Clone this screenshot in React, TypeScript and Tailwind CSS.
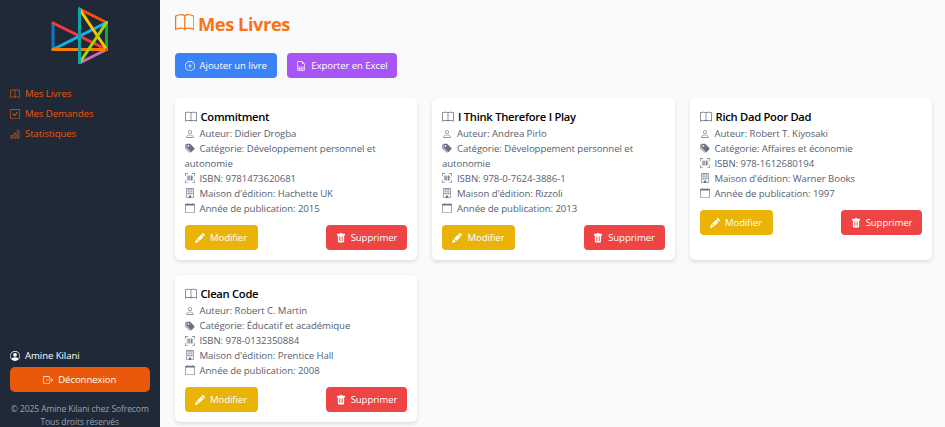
import type { ReactNode } from "react";
import {
  BsBarChart,
  BsBook,
  BsBoxArrowRight,
  BsBuilding,
  BsCalendar,
  BsCheckSquare,
  BsFileEarmarkSpreadsheet,
  BsPencilFill,
  BsPerson,
  BsPersonCircle,
  BsPlusCircle,
  BsTagsFill,
  BsTrashFill,
  BsUpcScan,
} from "react-icons/bs";

type Book = {
  title: string;
  author: string;
  category: string;
  isbn: string;
  publisher: string;
  year: number;
};

const books: Book[] = [
  { title: "Commitment", author: "Didier Drogba", category: "Développement personnel et autonomie", isbn: "9781473620681", publisher: "Hachette UK", year: 2015 },
  { title: "I Think Therefore I Play", author: "Andrea Pirlo", category: "Développement personnel et autonomie", isbn: "978-0-7624-3886-1", publisher: "Rizzoli", year: 2013 },
  { title: "Rich Dad Poor Dad", author: "Robert T. Kiyosaki", category: "Affaires et économie", isbn: "978-1612680194", publisher: "Warner Books", year: 1997 },
  { title: "Clean Code", author: "Robert C. Martin", category: "Éducatif et académique", isbn: "978-0132350884", publisher: "Prentice Hall", year: 2008 },
];

function Logo() {
  return (
    <svg className="h-[60px] w-[60px]" viewBox="0 0 60 60" fill="none" strokeWidth="3" strokeLinecap="round">
      <path d="M29.500 5 56.500 18.500" stroke="#ff4b0a" />
      <path d="M56.500 18.500V45.500" stroke="#0fae2b" />
      <path d="M56.500 45.500 29.500 59" stroke="#c76bb4" />
      <path d="M3 19V45.500" stroke="#0b7cc4" />
      <path d="M3 19 56.500 45.500" stroke="#fb3640" />
      <path d="M3 45.500 56.500 18.500" stroke="#0fb4ee" />
      <path d="M3 45.500H55.500" stroke="#ff7a00" />
      <path d="M29.500 5 56.500 45.500" stroke="#ffc400" />
      <path d="M29.500 59 56.500 18.500" stroke="#a4d40a" />
      <path d="M29.500 5V59" stroke="#0ba5a5" />
      <path d="M56.500 45.500h0" stroke="#fb3640" />
    </svg>
  );
}

function Line({ icon, children }: { icon: ReactNode; children: ReactNode }) {
  return (
    <p>
      <span className="mr-[5px] inline-block align-[-1.500px] text-[10px] leading-none text-gray-500 [&>svg]:block">{icon}</span>
      {children}
    </p>
  );
}

function BookCard({ book }: { book: Book }) {
  return (
    <article className="rounded-[5px] bg-white p-[10px] shadow-[0_2px_4px_rgba(0,0,0,0.12)]">
      <h2 className="flex h-[18.500px] items-center gap-[4px] pt-px text-[11.200px] font-semibold tracking-[-0.270px] text-black">
        <BsBook className="-mt-px h-[12px] w-[12px] text-[#6b7280]" />
        {book.title}
      </h2>
      <div className="-mb-[1.500px] pt-[0.500px] text-[9.600px] leading-[14.940px] tracking-[-0.060px] text-[#566070]">
        <Line icon={<BsPerson />}>Auteur: {book.author}</Line>
        <Line icon={<BsTagsFill />}>Catégorie: {book.category}</Line>
        <Line icon={<BsUpcScan />}>ISBN: {book.isbn}</Line>
        <Line icon={<BsBuilding />}>Maison d'édition: {book.publisher}</Line>
        <Line icon={<BsCalendar />}>Année de publication: {book.year}</Line>
      </div>
      <div className="mt-[10px] flex justify-between text-[9.600px] text-white">
        <button className="flex h-[25px] w-[73px] items-center justify-center gap-[5px] rounded-[4px] bg-[#eab308] pt-px">
          <BsPencilFill className="-mt-px text-[10px]" />
          Modifier
        </button>
        <button className="flex h-[25px] w-[81px] items-center justify-center gap-[5px] rounded-[4px] bg-[#ef4444] pt-px">
          <BsTrashFill className="-mt-px text-[10px]" />
          Supprimer
        </button>
      </div>
    </article>
  );
}

export default function App() {
  return (
    <div className="flex h-[427px] overflow-hidden bg-[#f9fafb] font-['Open_Sans','Noto_Sans',sans-serif] text-[9.600px] tracking-[-0.080px]">
      <aside className="flex w-[159.500px] shrink-0 flex-col bg-[#1f2937] px-[10px]">
        <div className="flex justify-center pt-[3.500px]">
          <Logo />
        </div>
        <nav className="mt-[20.500px] flex flex-col text-[#ea580c]">
          <a className="flex h-[20px] items-center gap-[5px]"><BsBook className="text-[10px]" />Mes Livres</a>
          <a className="flex h-[20px] items-center gap-[5px]"><BsCheckSquare className="text-[10px]" />Mes Demandes</a>
          <a className="flex h-[20px] items-center gap-[5px]"><BsBarChart className="text-[10px]" />Statistiques</a>
        </nav>
        <div className="mt-[204px] flex h-[15px] items-center gap-[5px] pt-px text-white">
          <BsPersonCircle className="-mt-px text-[10px]" />Amine Kilani
        </div>
        <button className="mt-[4px] flex h-[25px] shrink-0 items-center justify-center gap-[5px] rounded-[5px] bg-[#ea580c] pt-px text-white">
          <BsBoxArrowRight className="-mt-px text-[10px]" />Déconnexion
        </button>
        <footer className="mt-[11px] text-center text-[8.500px] leading-[12.500px] whitespace-nowrap text-[#9ca3af]">
          <p>© 2025 Amine Kilani chez Sofrecom</p>
          <p>Tous droits réservés</p>
        </footer>
      </aside>
      <main className="flex-1 pt-[12px] pr-[13px] pl-[15px]">
        <h1 className="flex h-[22px] items-center gap-[4px] pt-px text-[18.300px] font-bold tracking-[-0.450px] text-[#f97316]">
          <BsBook className="-mt-px text-[19.500px]" />
          Mes Livres
        </h1>
        <div className="mt-[19px] flex gap-[10px] text-white">
          <button className="flex h-[25px] w-[102.500px] items-center justify-center gap-[5px] rounded-[4px] bg-[#3b82f6] pt-px">
            <BsPlusCircle className="-mt-px text-[10px]" />Ajouter un livre
          </button>
          <button className="flex h-[25px] w-[110px] items-center justify-center gap-[5px] rounded-[4px] bg-[#a855f7] pt-px">
            <BsFileEarmarkSpreadsheet className="-mt-px text-[10px]" />Exporter en Excel
          </button>
        </div>
        <section className="mt-[20px] grid grid-cols-3 gap-[15px]">
          {books.map((book) => (
            <BookCard key={book.title} book={book} />
          ))}
        </section>
      </main>
    </div>
  );
}
